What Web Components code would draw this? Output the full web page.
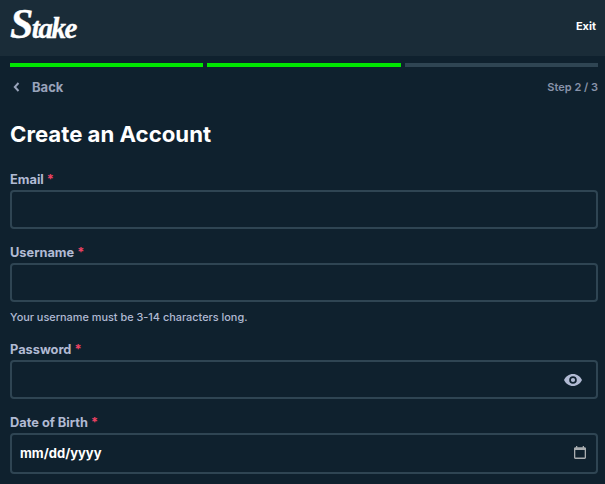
<!DOCTYPE html>
<html>
<head>
<meta charset="utf-8">
<title>Create an Account</title>
<style>
    html, body { margin: 0; padding: 0; background: #0f212e; overflow: hidden; }
    body { font-family: Inter, "Liberation Sans", sans-serif; height: 484px; }
</style>
</head>
<body>
<stake-header logo="Stake"><span slot="action">Exit</span></stake-header>
<step-progress total="3" current="2"></step-progress>
<step-nav step="Step 2 / 3">Back</step-nav>
<signup-form>
    <form-field label="Email" required></form-field>
    <form-field label="Username" required hint="Your username must be 3-14 characters long."></form-field>
    <form-field label="Password" required>
        <svg slot="icon" width="18" height="12" viewBox="0 0 18 12"><path fill="#b1bad3" fill-rule="evenodd" d="M9 0C5 0 1.700 2.500 0 6c1.700 3.500 5 6 9 6s7.300-2.500 9-6c-1.700-3.500-5-6-9-6Zm0 2.200a3.800 3.800 0 1 1 0 7.600 3.800 3.800 0 0 1 0-7.600Zm0 1.700a2.100 2.100 0 1 0 0 4.200 2.100 2.100 0 0 0 0-4.200Z"/></svg>
    </form-field>
    <form-field label="Date of Birth" required tall value="mm/dd/yyyy">
        <svg slot="icon" width="12" height="13" viewBox="0 0 12 13" style="margin-right:-4px;margin-top:-2px"><path fill="#a9adb0" fill-rule="evenodd" d="M2 0h1.300v1.300h5.400V0H10v1.300h.7c.7 0 1.300.6 1.300 1.300v9c0 .7-.6 1.400-1.300 1.400H1.300C.6 13 0 12.300 0 11.600v-9c0-.7.600-1.300 1.300-1.300H2V0Zm-.7 4v7.600h9.400V4H1.300Z"/></svg>
    </form-field>
</signup-form>

<script>
    const headerTemplate = document.createElement('template');
    headerTemplate.innerHTML = `
        <style>
            :host {
                display: flex;
                align-items: center;
                justify-content: space-between;
                height: 56px;
                padding: 0 9px 0 10px;
                background: #1a2c38;
                color: #fff;
            }
            .logo {
                font: italic 700 29px/1 "Liberation Serif", serif;
                letter-spacing: -1.500px;
                margin-top: -8px;
                -webkit-text-stroke: .4px #fff;
            }
            .logo::first-letter {
                font-size: 42px;
            }
            .action {
                font-size: 11px;
                font-weight: 700;
                margin-top: -5px;
            }
        </style>
        <div class="logo"></div>
        <div class="action"><slot name="action"></slot></div>
    `;

    class StakeHeader extends HTMLElement {
        constructor() {
            super();
            this.attachShadow({mode: 'open'});
            this.shadowRoot.appendChild(headerTemplate.content.cloneNode(true));
        }

        connectedCallback() {
            this.shadowRoot.querySelector('.logo').textContent = this.getAttribute('logo');
        }
    }

    const progressTemplate = document.createElement('template');
    progressTemplate.innerHTML = `
        <style>
            :host {
                display: flex;
                gap: 4px;
                padding: 7px 7px 0 10px;
            }
            div {
                flex: 1;
                height: 4px;
                background: #2f4553;
            }
            div.done {
                background: #00e701;
            }
        </style>
    `;

    class StepProgress extends HTMLElement {
        constructor() {
            super();
            this.attachShadow({mode: 'open'});
            this.shadowRoot.appendChild(progressTemplate.content.cloneNode(true));
        }

        connectedCallback() {
            let total = Number(this.getAttribute('total'));
            let current = Number(this.getAttribute('current'));
            for (let i = 0; i < total; i++) {
                let bar = document.createElement('div');
                if (i < current) {
                    bar.className = 'done';
                }
                this.shadowRoot.appendChild(bar);
            }
        }
    }

    const navTemplate = document.createElement('template');
    navTemplate.innerHTML = `
        <style>
            :host {
                display: flex;
                align-items: center;
                justify-content: space-between;
                height: 40px;
                padding: 0 7px 0 13px;
                color: #b1bad3;
            }
            .back {
                display: flex;
                align-items: center;
                gap: 12px;
                font-size: 13px;
                font-weight: 700;
                opacity: .85;
            }
            .step {
                font-size: 11px;
                font-weight: 600;
                opacity: .75;
            }
        </style>
        <div class="back">
            <svg width="7" height="10" viewBox="0 0 7 10"><path fill="none" stroke="#b1bad3" stroke-width="2" d="M5.500 1 1.800 5l3.700 4"/></svg>
            <span><slot></slot></span>
        </div>
        <div class="step"></div>
    `;

    class StepNav extends HTMLElement {
        constructor() {
            super();
            this.attachShadow({mode: 'open'});
            this.shadowRoot.appendChild(navTemplate.content.cloneNode(true));
        }

        connectedCallback() {
            this.shadowRoot.querySelector('.step').textContent = this.getAttribute('step');
        }
    }

    const formTemplate = document.createElement('template');
    formTemplate.innerHTML = `
        <style>
            :host {
                display: block;
                padding: 0 7px 0 10px;
            }
            h1 {
                margin: 0;
                height: 29px;
                padding: 12px 0 22px;
                font-size: 22.200px;
                line-height: 29px;
                font-weight: 700;
                color: #fff;
            }
        </style>
        <h1>Create an Account</h1>
        <slot></slot>
    `;

    class SignupForm extends HTMLElement {
        constructor() {
            super();
            this.attachShadow({mode: 'open'});
            this.shadowRoot.appendChild(formTemplate.content.cloneNode(true));
        }
    }

    const fieldTemplate = document.createElement('template');
    fieldTemplate.innerHTML = `
        <style>
            :host {
                display: block;
                margin-bottom: 14px;
            }
            label {
                display: block;
                height: 17px;
                margin-bottom: 3px;
                font-size: 12.800px;
                line-height: 19px;
                font-weight: 700;
                color: #b1bad3;
            }
            .star {
                color: #ed4163;
            }
            .box {
                display: flex;
                align-items: center;
                justify-content: space-between;
                box-sizing: border-box;
                height: 39px;
                padding: 0 14px 0 8px;
                border: 2px solid #2f4553;
                border-radius: 4px;
                color: #fff;
                font-size: 13px;
                font-weight: 700;
            }
            .value {
                margin-top: -2px;
            }
            :host([tall]) .box {
                height: 41px;
            }
            .hint {
                margin-top: 8px;
                margin-bottom: 16px;
                font-size: 10.900px;
                line-height: 14px;
                font-weight: 500;
                color: #b1bad3;
            }
            .hint:empty {
                display: none;
            }
        </style>
        <label><span class="name"></span> <span class="star">*</span></label>
        <div class="box">
            <span class="value"></span>
            <slot name="icon"></slot>
        </div>
        <div class="hint"></div>
    `;

    class FormField extends HTMLElement {
        constructor() {
            super();
            this.attachShadow({mode: 'open'});
            this.shadowRoot.appendChild(fieldTemplate.content.cloneNode(true));
        }

        connectedCallback() {
            this.shadowRoot.querySelector('.name').textContent = this.getAttribute('label');
            this.shadowRoot.querySelector('.value').textContent = this.getAttribute('value') || '';
            this.shadowRoot.querySelector('.hint').textContent = this.getAttribute('hint') || '';
            if (!this.hasAttribute('required')) {
                this.shadowRoot.querySelector('.star').remove();
            }
        }
    }

    customElements.define('stake-header', StakeHeader);
    customElements.define('step-progress', StepProgress);
    customElements.define('step-nav', StepNav);
    customElements.define('signup-form', SignupForm);
    customElements.define('form-field', FormField);
</script>
</body>
</html>
